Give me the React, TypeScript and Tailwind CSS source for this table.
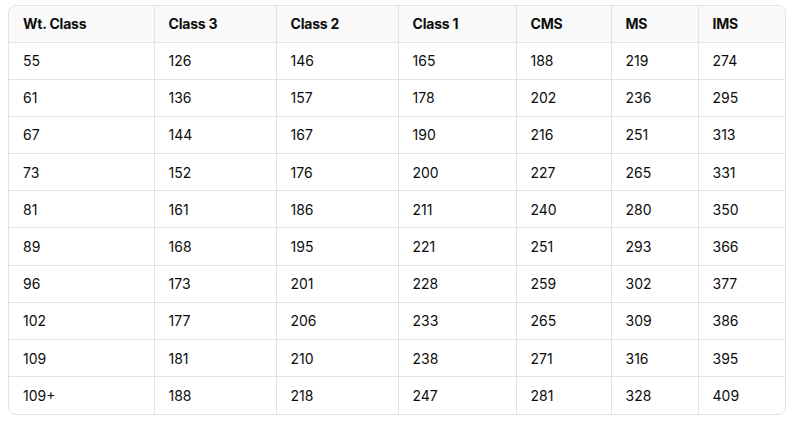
import React from 'react';

const headers = ['Wt. Class', 'Class 3', 'Class 2', 'Class 1', 'CMS', 'MS', 'IMS'];
const widths = ['w-[145px]', 'w-[122px]', 'w-[122px]', 'w-[118px]', 'w-[95px]', 'w-[87px]', 'w-[88px]'];

const rows = [
  ['55', '126', '146', '165', '188', '219', '274'],
  ['61', '136', '157', '178', '202', '236', '295'],
  ['67', '144', '167', '190', '216', '251', '313'],
  ['73', '152', '176', '200', '227', '265', '331'],
  ['81', '161', '186', '211', '240', '280', '350'],
  ['89', '168', '195', '221', '251', '293', '366'],
  ['96', '173', '201', '228', '259', '302', '377'],
  ['102', '177', '206', '233', '265', '309', '386'],
  ['109', '181', '210', '238', '271', '316', '395'],
  ['109+', '188', '218', '247', '281', '328', '409'],
];

const App: React.FC = () => {
  return (
    <div className="w-[796px] h-[421px] bg-white pt-[5px] pl-[8px] font-['Inter',sans-serif] text-[14px] text-[#0d0d0d]">
      <div className="w-[778px] border border-[#e3e3e3] rounded-[8px] overflow-hidden">
        <table className="w-full border-collapse table-fixed">
          <thead>
            <tr className="h-[36px] bg-[#fafafa]">
              {headers.map((h, i) => (
                <th
                  key={h}
                  className={`${widths[i]} text-left font-bold tracking-[-0.2px] px-[14px] border-b border-[#e3e3e3] ${
                    i > 0 ? 'border-l' : ''
                  }`}
                >
                  {h}
                </th>
              ))}
            </tr>
          </thead>
          <tbody>
            {rows.map((r, ri) => (
              <tr key={ri} className="h-[37.2px]">
                {r.map((c, ci) => (
                  <td
                    key={ci}
                    className={`px-[14px] border-[#e3e3e3] ${ci > 0 ? 'border-l' : ''} ${
                      ri < rows.length - 1 ? 'border-b' : ''
                    }`}
                  >
                    {c}
                  </td>
                ))}
              </tr>
            ))}
          </tbody>
        </table>
      </div>
    </div>
  );
};

export default App;
